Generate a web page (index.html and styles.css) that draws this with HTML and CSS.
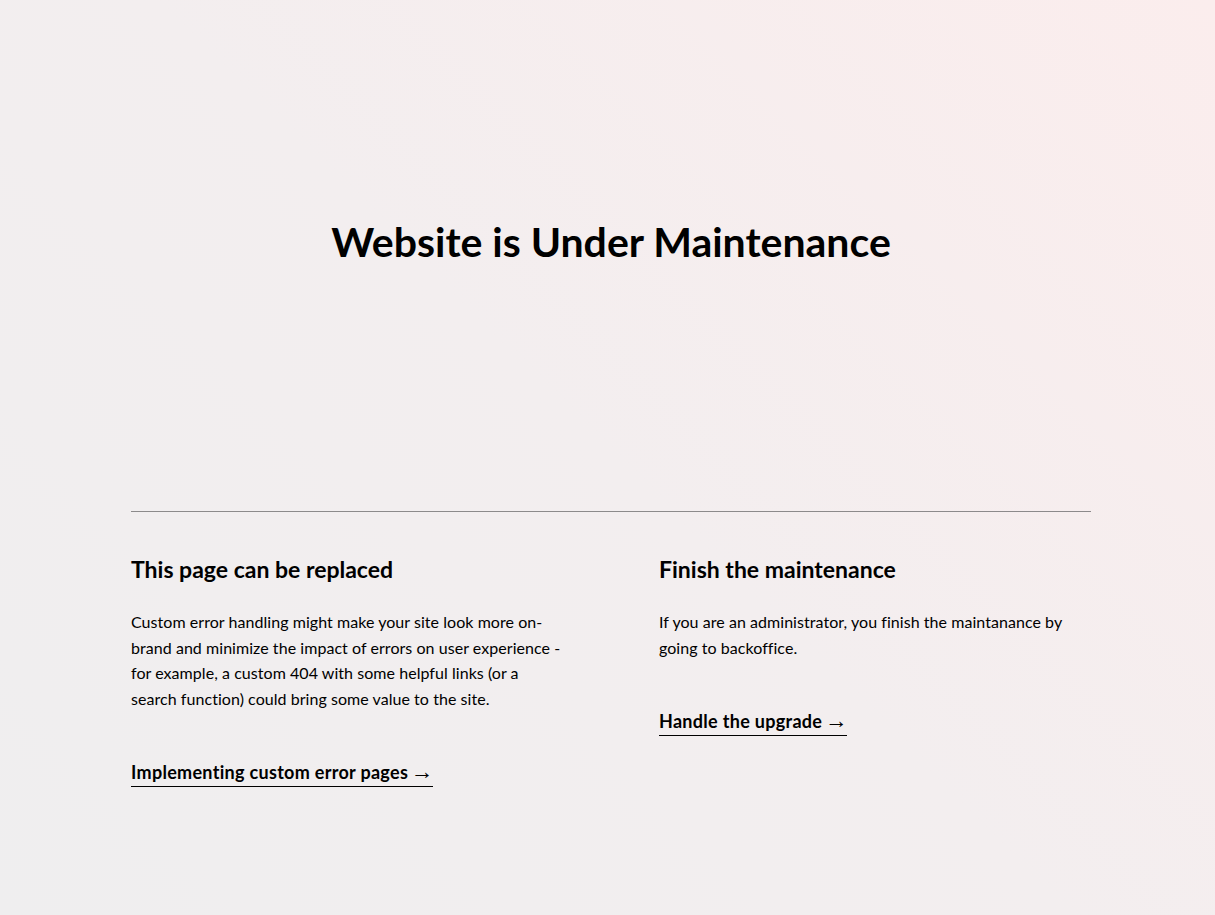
FILE: index.html
```html
<!DOCTYPE html>
<html lang="en">
<head>
<meta charset="utf-8">
<title>Website is Under Maintenance</title>
<link rel="stylesheet" href="styles.css">
</head>
<body>
<section class="page">
  <article class="wrap">
    <h1 class="title">Website is Under Maintenance</h1>
    <div class="cols">
      <div class="col">
        <h2 class="col-title">This page can be replaced</h2>
        <p class="col-text">Custom error handling might make your site look more on-brand and minimize the impact of errors on user experience - for example, a custom 404 with some helpful links (or a search function) could bring some value to the site.</p>
        <a class="col-link" href="#">Implementing custom error pages<span class="arrow"> &rarr;</span></a>
      </div>
      <div class="col">
        <h2 class="col-title">Finish the maintenance</h2>
        <p class="col-text">If you are an administrator, you finish the maintanance by going to backoffice.</p>
        <a class="col-link" href="#">Handle the upgrade<span class="arrow"> &rarr;</span></a>
      </div>
    </div>
  </article>
</section>
</body>
</html>
```

FILE: styles.css
```css
html, body {
  margin: 0;
  padding: 0;
  height: 100%;
}

body {
  font-family: Lato, "Noto Sans", sans-serif;
  color: #000;
  background: linear-gradient(45deg, #efeeef 0%, #f3eeef 50%, #fbeded 100%);
}

.page {
  min-height: 915px;
  box-sizing: border-box;
}

.wrap {
  width: 960px;
  margin-left: 131px;
  padding-top: 217px;
}

.title {
  margin: 0;
  font-size: 41px;
  line-height: 49px;
  font-weight: 700;
  text-align: center;
}

.cols {
  margin-top: 245px;
  border-top: 1px solid #8c8a8b;
  display: grid;
  grid-template-columns: 432px 432px;
  column-gap: 96px;
  padding-top: 43px;
}

.col-title {
  margin: 0;
  font-size: 23px;
  line-height: 28px;
  font-weight: 700;
}

.col-text {
  margin: 26px 0 0;
  font-size: 16px;
  line-height: 25.6px;
  letter-spacing: 0.05px;
}

.col-link {
  display: inline-block;
  margin-top: 50px;
  font-size: 18px;
  line-height: 22px;
  font-weight: 700;
  letter-spacing: 0.3px;
  color: #000;
  text-decoration: none;
  border-bottom: 1px solid #000;
  padding-bottom: 3px;
}

.arrow {
  font-family: "Liberation Serif", serif;
  font-weight: 400;
  font-size: 1.25em;
  line-height: 0;
  letter-spacing: 0;
  word-spacing: -3px;
}
```
